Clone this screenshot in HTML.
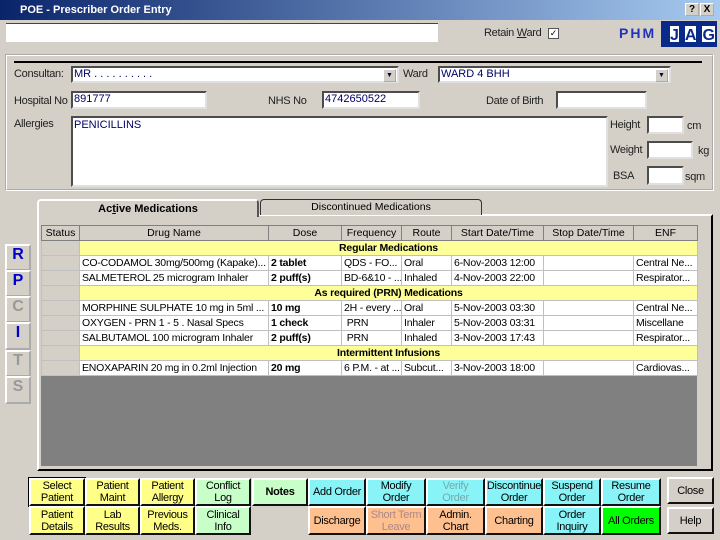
<!DOCTYPE html><html><head><style>
*{box-sizing:border-box;margin:0;padding:0}
body{width:720px;height:540px;background:#d4d0c8;font-family:"Liberation Sans",sans-serif;font-size:11px;position:relative;overflow:hidden;color:#000}
.a{position:absolute}
.in{position:absolute;background:#fff;border:2px inset #a0a0a0;border-right-color:#e0e0e0;border-bottom-color:#e0e0e0;color:#000066;font-size:11px;padding:0 1px;line-height:13px}
.lbl{position:absolute;color:#222;font-size:11px;letter-spacing:-0.3px}
.dd{position:absolute;right:1px;top:1px;width:13px;height:13px;background:#d4d0c8;border:1px outset #fff;font-size:7px;text-align:center;line-height:11px}
.side{position:absolute;left:5px;width:26px;border:2px outset #fff;background:#d4d0c8;font-weight:bold;font-size:16px;text-align:center;color:#0000cc}
.b{position:absolute;border:2px outset #fff;border-right-color:#666;border-bottom-color:#666;text-align:center;font-size:11px;line-height:12px;display:flex;align-items:center;justify-content:center;letter-spacing:-0.3px}
.y{background:#ffff88}.g{background:#c8ffc8}.c{background:#88f4f8}.o{background:#ffc090}
table{border-collapse:collapse;font-size:10.5px;position:absolute;left:41px;top:225px;width:656px;table-layout:fixed}
td{height:15px;border:1px solid #c0c0c0;padding:0 2px;white-space:nowrap;overflow:hidden;background:#fff;letter-spacing:-0.2px}
th{height:15px;font-weight:normal;border:1px solid #808080;background:#d4d0c8;font-size:10.5px}
td.s{background:#d4d0c8}
tr.h td.t{background:#ffff99;text-align:center;font-weight:bold}
td.d{font-weight:bold}
</style></head><body>
<div class="a" style="left:0;top:0;width:720px;height:20px;background:linear-gradient(90deg,#0a246a,#a6caf0);color:#fff;font-weight:bold;font-size:11px;line-height:20px;padding-left:20px">POE - Prescriber Order Entry</div>
<div class="a" style="left:685px;top:3px;width:14px;height:13px;background:#d4d0c8;border:1px outset #fff;font-weight:bold;font-size:10px;text-align:center;line-height:11px">?</div>
<div class="a" style="left:700px;top:3px;width:14px;height:13px;background:#d4d0c8;border:1px outset #fff;font-weight:bold;font-size:10px;text-align:center;line-height:11px">X</div>
<div class="a" style="left:6px;top:23px;width:432px;height:19px;background:#fff;border-top:1px solid #444"></div>
<div class="lbl" style="left:484px;top:27px">Retain <u>W</u>ard</div>
<div class="a" style="left:548px;top:28px;width:11px;height:11px;background:#fff;border:1px solid #555;font-size:9px;line-height:9px;text-align:center">✓</div>
<div class="a" style="left:619px;top:25px;color:#2233bb;font-weight:bold;font-size:14px;letter-spacing:2px">PHM</div>
<div class="a" style="left:661px;top:21px;width:56px;height:26px;background:#0a2a8a"></div>
<div class="a" style="left:668px;top:24px;width:47px;height:20px;display:flex;gap:2px"><span style="flex:1;background:#fff;color:#0a2a8a;font-weight:bold;font-size:16px;text-align:center;line-height:20px;border:2px solid #0a2a8a">J</span><span style="flex:1;background:#fff;color:#0a2a8a;font-weight:bold;font-size:16px;text-align:center;line-height:20px;border:2px solid #0a2a8a">A</span><span style="flex:1;background:#fff;color:#0a2a8a;font-weight:bold;font-size:16px;text-align:center;line-height:20px;border:2px solid #0a2a8a">G</span></div>
<div class="a" style="left:5px;top:54px;width:709px;height:137px;border:2px groove #fff"></div>
<div class="a" style="left:14px;top:61px;width:688px;height:2px;background:#000"></div>
<div class="lbl" style="left:14px;top:68px">Consultan:</div>
<div class="in" style="left:71px;top:66px;width:328px;height:17px">MR . . . . . . . . . .<span class="dd">▼</span></div>
<div class="lbl" style="left:403px;top:68px">Ward</div>
<div class="in" style="left:438px;top:66px;width:233px;height:17px">WARD 4 BHH<span class="dd">▼</span></div>
<div class="lbl" style="left:14px;top:95px">Hospital No</div>
<div class="in" style="left:71px;top:91px;width:136px;height:18px">891777</div>
<div class="lbl" style="left:268px;top:95px">NHS No</div>
<div class="in" style="left:322px;top:91px;width:98px;height:18px">4742650522</div>
<div class="lbl" style="left:486px;top:95px">Date of Birth</div>
<div class="in" style="left:556px;top:91px;width:91px;height:18px"></div>
<div class="lbl" style="left:14px;top:118px">Allergies</div>
<div class="in" style="left:71px;top:116px;width:537px;height:71px;padding-top:1px">PENICILLINS</div>
<div class="lbl" style="left:610px;top:119px">Height</div><div class="in" style="left:647px;top:116px;width:37px;height:18px"></div><div class="lbl" style="left:687px;top:120px">cm</div>
<div class="lbl" style="left:610px;top:144px">Weight</div><div class="in" style="left:647px;top:141px;width:46px;height:18px"></div><div class="lbl" style="left:698px;top:145px">kg</div>
<div class="lbl" style="left:613px;top:170px">BSA</div><div class="in" style="left:647px;top:166px;width:37px;height:19px"></div><div class="lbl" style="left:685px;top:171px">sqm</div>
<div class="a" style="left:37px;top:214px;width:676px;height:257px;border:2px outset #fff;border-right-color:#555;border-bottom-color:#555"></div>
<div class="a" style="left:37px;top:199px;width:222px;height:18px;background:#d4d0c8;border:2px solid #fff;border-bottom:none;border-right-color:#555;border-radius:4px 4px 0 0;text-align:center;font-weight:bold;line-height:16px">Ac<u>t</u>ive Medications</div>
<div class="a" style="left:260px;top:199px;width:222px;height:16px;background:#d4d0c8;border:1px solid #333;border-bottom:none;border-radius:4px 4px 0 0;text-align:center;line-height:15px;font-size:10.5px">Discontinued Medications</div>
<div class="a" style="left:41px;top:225px;width:656px;height:241px;background:#808080"></div>
<table>
<colgroup><col style="width:38px"><col style="width:189px"><col style="width:73px"><col style="width:60px"><col style="width:50px"><col style="width:92px"><col style="width:90px"><col style="width:64px"></colgroup>
<tr><th>Status</th><th>Drug Name</th><th>Dose</th><th>Frequency</th><th>Route</th><th>Start Date/Time</th><th>Stop Date/Time</th><th>ENF</th></tr>
<tr class="h"><td class="s"></td><td class="t" colspan="7">Regular Medications</td></tr>
<tr><td class="s"></td><td>CO-CODAMOL 30mg/500mg (Kapake)...</td><td class="d">2 tablet</td><td>QDS - FO...</td><td>Oral</td><td>6-Nov-2003 12:00</td><td></td><td>Central Ne...</td></tr>
<tr><td class="s"></td><td>SALMETEROL 25 microgram Inhaler</td><td class="d">2 puff(s)</td><td>BD-6&amp;10 - ...</td><td>Inhaled</td><td>4-Nov-2003 22:00</td><td></td><td>Respirator...</td></tr>
<tr class="h"><td class="s"></td><td class="t" colspan="7">As required (PRN) Medications</td></tr>
<tr><td class="s"></td><td>MORPHINE SULPHATE 10 mg in 5ml ...</td><td class="d">10 mg</td><td>2H - every ...</td><td>Oral</td><td>5-Nov-2003 03:30</td><td></td><td>Central Ne...</td></tr>
<tr><td class="s"></td><td>OXYGEN - PRN 1 - 5 . Nasal Specs</td><td class="d">1 check</td><td>&nbsp;PRN</td><td>Inhaler</td><td>5-Nov-2003 03:31</td><td></td><td>Miscellane</td></tr>
<tr><td class="s"></td><td>SALBUTAMOL 100 microgram Inhaler</td><td class="d">2 puff(s)</td><td>&nbsp;PRN</td><td>Inhaled</td><td>3-Nov-2003 17:43</td><td></td><td>Respirator...</td></tr>
<tr class="h"><td class="s"></td><td class="t" colspan="7">Intermittent Infusions</td></tr>
<tr><td class="s"></td><td>ENOXAPARIN 20 mg in 0.2ml Injection</td><td class="d">20 mg</td><td>6 P.M. - at ...</td><td>Subcut...</td><td>3-Nov-2003 18:00</td><td></td><td>Cardiovas...</td></tr>
</table>
<div class="side" style="top:244px;height:27px">R</div>
<div class="side" style="top:270px;height:27px">P</div>
<div class="side" style="top:296px;height:27px;color:#999">C</div>
<div class="side" style="top:322px;height:28px">I</div>
<div class="side" style="top:350px;height:27px;color:#999">T</div>
<div class="side" style="top:376px;height:28px;color:#999">S</div>
<div class="b y" style="left:29px;top:478px;width:56px;height:28px;outline:1px solid #000">Select<br>Patient</div>
<div class="b y" style="left:85px;top:478px;width:55px;height:28px">Patient<br>Maint</div>
<div class="b y" style="left:140px;top:478px;width:55px;height:28px">Patient<br>Allergy</div>
<div class="b g" style="left:195px;top:478px;width:56px;height:28px">Conflict<br>Log</div>
<div class="b g" style="left:252px;top:478px;width:56px;height:28px;font-weight:bold">Notes</div>
<div class="b c" style="left:308px;top:478px;width:58px;height:28px">Add Order</div>
<div class="b c" style="left:366px;top:478px;width:60px;height:28px">Modify<br>Order</div>
<div class="b c" style="left:426px;top:478px;width:59px;height:28px;color:#7aa">Verify Order</div>
<div class="b c" style="left:485px;top:478px;width:58px;height:28px">Discontinue<br>Order</div>
<div class="b c" style="left:543px;top:478px;width:58px;height:28px">Suspend<br>Order</div>
<div class="b c" style="left:601px;top:478px;width:60px;height:28px">Resume<br>Order</div>
<div class="b" style="left:667px;top:477px;width:47px;height:27px;background:#d4d0c8">Close</div>
<div class="b y" style="left:29px;top:506px;width:56px;height:29px">Patient<br>Details</div>
<div class="b y" style="left:85px;top:506px;width:55px;height:29px">Lab<br>Results</div>
<div class="b y" style="left:140px;top:506px;width:55px;height:29px">Previous<br>Meds.</div>
<div class="b g" style="left:195px;top:506px;width:56px;height:29px">Clinical<br>Info</div>
<div class="b o" style="left:308px;top:506px;width:58px;height:29px">Discharge</div>
<div class="b o" style="left:366px;top:506px;width:60px;height:29px;color:#a88">Short Term<br>Leave</div>
<div class="b o" style="left:426px;top:506px;width:59px;height:29px">Admin.<br>Chart</div>
<div class="b o" style="left:485px;top:506px;width:58px;height:29px">Charting</div>
<div class="b c" style="left:543px;top:506px;width:58px;height:29px">Order<br>Inquiry</div>
<div class="b" style="left:601px;top:506px;width:60px;height:29px;background:#00ff00">All Orders</div>
<div class="b" style="left:667px;top:507px;width:47px;height:27px;background:#d4d0c8">Help</div>
</body></html>
